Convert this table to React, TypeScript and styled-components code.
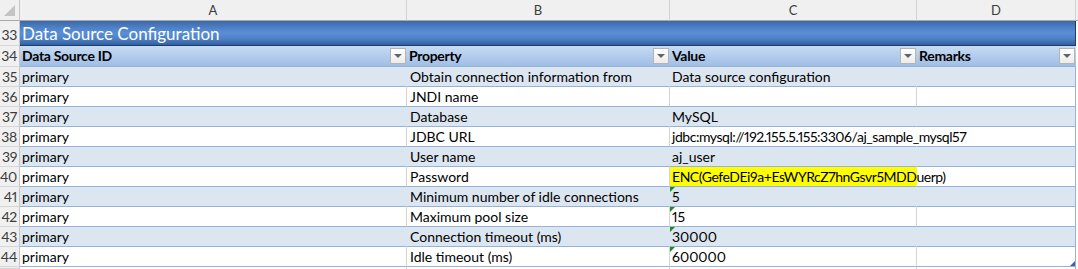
import React from "react";
import styled, { createGlobalStyle, css } from "styled-components";

const GlobalStyle = createGlobalStyle`
  html, body {
    margin: 0;
    padding: 0;
    background: #ffffff;
    overflow: hidden;
  }
  body {
    font-family: Calibri, Lato, "Open Sans", sans-serif;
  }
`;

const Sheet = styled.div`
  display: grid;
  grid-template-columns: 20px 387px 263px 247px 159px 1fr;
  grid-template-rows: 21px 25px 21px repeat(10, 20px) 1fr;
  height: 100vh;
  font-family: Lato, "Open Sans", sans-serif;
  font-size: 14px;
  font-variant-numeric: proportional-nums;
  color: #000;
`;

const Corner = styled.div`
  background: #f0f0f0;
  border-right: 1px solid #c6c6c6;
  border-bottom: 1px solid #a8a8a8;
  box-sizing: border-box;
  display: flex;
  align-items: flex-end;
  justify-content: flex-end;
  padding: 0 4px 4px 0;
`;

const ColLetter = styled.div<{ $last?: boolean }>`
  background: #f0f0f0;
  border-bottom: 1px solid #a8a8a8;
  border-right: ${(p) => (p.$last ? "none" : "1px solid #d2d2d2")};
  box-sizing: border-box;
  text-align: center;
  line-height: 21px;
  font-size: 13px;
  color: #3c3c3c;
`;

const RowNum = styled.div<{ $tall?: boolean }>`
  background: #f0f0f0;
  border-right: 1px solid #c6c6c6;
  border-bottom: 1px solid #d6d6d6;
  box-sizing: border-box;
  overflow: hidden;
  white-space: nowrap;
  text-align: right;
  padding-right: 2px;
  color: #3c3c3c;
  font-size: 14px;
  letter-spacing: -0.3px;
  line-height: ${(p) => (p.$tall ? "27px" : "20px")};
`;

const Title = styled.div`
  grid-column: 2 / span 4;
  background: linear-gradient(
    to bottom,
    #3b69aa 0%,
    #4f82c8 30%,
    #5a8fd6 50%,
    #4d80c6 75%,
    #33609f 100%
  );
  border-bottom: 1px solid #1f3d6a;
  border-right: 1px solid #1f3d6a;
  box-sizing: border-box;
  color: #ffffff;
  font-size: 17px;
  line-height: 25px;
  padding-left: 2px;
  white-space: nowrap;
`;

const HeadCell = styled.div`
  background: linear-gradient(to bottom, #c8dbf2 0%, #b3ccec 50%, #a0bee6 100%);
  border-bottom: 1px solid #95b3d7;
  box-sizing: border-box;
  display: flex;
  align-items: center;
  justify-content: space-between;
  padding: 0 1px 0 2px;
  font-weight: 700;
  letter-spacing: -0.3px;
  line-height: 20px;
  white-space: nowrap;
`;

const FilterButton = styled.span`
  width: 16px;
  height: 16px;
  box-sizing: border-box;
  border: 1px solid #b4b4b4;
  background: linear-gradient(to bottom, #ffffff, #ececec);
  display: flex;
  align-items: center;
  justify-content: center;

  &::after {
    content: "";
    border-left: 4px solid transparent;
    border-right: 4px solid transparent;
    border-top: 4px solid #646464;
  }
`;

const Cell = styled.div<{
  $band: boolean;
  $fill?: string;
  $edge?: boolean;
  $spill?: boolean;
  $flag?: boolean;
  $indent?: number;
}>`
  position: relative;
  box-sizing: border-box;
  background: ${(p) => p.$fill || (p.$band ? "#dce6f1" : "transparent")};
  border-bottom: 1px solid #95b3d7;
  border-right: ${(p) =>
    p.$edge
      ? "1px solid #95b3d7"
      : p.$band || p.$spill || p.$fill
      ? "1px solid transparent"
      : "1px solid #d4d4d4"};
  padding-left: ${(p) => p.$indent ?? 2}px;
  letter-spacing: ${(p) => (p.$spill ? "-0.45px" : "0")};
  line-height: 19px;
  white-space: nowrap;
  overflow: visible;

  ${(p) =>
    p.$flag &&
    css`
      &::before {
        content: "";
        position: absolute;
        left: 0;
        top: 0;
        border-top: 5px solid #1f8a1f;
        border-right: 5px solid transparent;
      }
    `}
`;

const Filler = styled.div`
  background: #ffffff;
`;

const TailCell = styled.div<{ $edge?: boolean }>`
  box-sizing: border-box;
  border-right: ${(p) => (p.$edge ? "1px solid #95b3d7" : "1px solid #d4d4d4")};
`;

const ResizeGrip = styled.svg`
  position: absolute;
  right: 0;
  bottom: 0;
`;

type Row = {
  id: string;
  property: string;
  value: string;
  remarks: string;
  fill?: string;
  textFlag?: boolean;
};

const rows: Row[] = [
  { id: "primary", property: "Obtain connection information from", value: "Data source configuration", remarks: "" },
  { id: "primary", property: "JNDI name", value: "", remarks: "" },
  { id: "primary", property: "Database", value: "MySQL", remarks: "" },
  { id: "primary", property: "JDBC URL", value: "jdbc:mysql://192.155.5.155:3306/aj_sample_mysql57", remarks: "" },
  { id: "primary", property: "User name", value: "aj_user", remarks: "" },
  { id: "primary", property: "Password", value: "ENC(GefeDEi9a+EsWYRcZ7hnGsvr5MDDuerp)", remarks: "", fill: "#ffff00" },
  { id: "primary", property: "Minimum number of idle connections", value: "5", remarks: "", textFlag: true },
  { id: "primary", property: "Maximum pool size", value: "15", remarks: "", textFlag: true },
  { id: "primary", property: "Connection timeout (ms)", value: "30000", remarks: "", textFlag: true },
  { id: "primary", property: "Idle timeout (ms)", value: "600000", remarks: "", textFlag: true },
];

const headers = ["Data Source ID", "Property", "Value", "Remarks"];
const FIRST_ROW = 35;
// Column C is 247px wide; longer values spill into column D
const spills = (v: string) => v.length > 34;

export default function App() {
  return (
    <>
      <GlobalStyle />
      <Sheet>
        <Corner>
          <svg width="11" height="11" viewBox="0 0 11 11">
            <polygon points="11,0 11,11 0,11" fill="#c4c4c4" />
          </svg>
        </Corner>
        {["A", "B", "C", "D"].map((l) => (
          <ColLetter key={l}>{l}</ColLetter>
        ))}
        <ColLetter $last />

        <RowNum $tall>33</RowNum>
        <Title>Data Source Configuration</Title>
        <Filler />

        <RowNum>34</RowNum>
        {headers.map((h) => (
          <HeadCell key={h}>
            {h}
            <FilterButton />
          </HeadCell>
        ))}
        <Filler />

        {rows.map((r, i) => {
          const band = i % 2 === 0;
          const last = i === rows.length - 1;
          return (
            <React.Fragment key={i}>
              <RowNum>{FIRST_ROW + i}</RowNum>
              <Cell $band={band}>{r.id}</Cell>
              <Cell $band={band} $indent={3}>
                {r.property}
              </Cell>
              <Cell
                $band={band}
                $fill={r.fill}
                $spill={spills(r.value)}
                $flag={r.textFlag}
              >
                {r.value}
              </Cell>
              <Cell $band={band} $edge>
                {r.remarks}
                {last && (
                  <ResizeGrip width="5" height="5" viewBox="0 0 5 5">
                    <polygon points="5,0 5,5 0,5" fill="#3f5cc0" />
                  </ResizeGrip>
                )}
              </Cell>
              <Filler />
            </React.Fragment>
          );
        })}

        <RowNum />
        <TailCell />
        <TailCell />
        <TailCell />
        <TailCell $edge />
        <Filler />
      </Sheet>
    </>
  );
}
